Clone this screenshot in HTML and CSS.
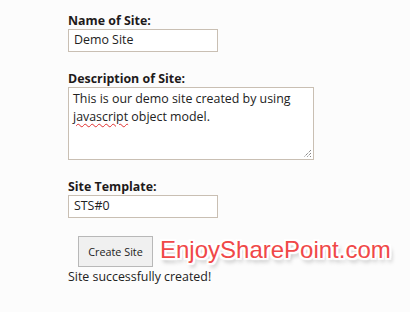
FILE: index.html
```
<!DOCTYPE html>
<html>
<head>
<meta charset="utf-8">
<link rel="stylesheet" href="styles.css">
</head>
<body>
<div class="form">
  <label class="lbl first">Name of Site:</label>
  <div class="field">Demo Site</div>
  <label class="lbl">Description of Site:</label>
  <div class="area">This is our demo site created by using <span class="spell">javascript</span> object model.<svg class="grip" width="9" height="9" viewBox="0 0 9 9"><path d="M8 1L1 8M8 4L4 8M8 7L7 8" stroke="#555" stroke-width="1" stroke-dasharray="1 1" fill="none"/></svg></div>
  <label class="lbl">Site Template:</label>
  <div class="field">STS#0</div>
  <div class="actions">
    <button class="btn">Create Site</button>
    <span class="mark">EnjoySharePoint.com</span>
  </div>
  <div class="msg">Site successfully created!</div>
</div>
</body>
</html>
```
FILE: styles.css
```
html, body { margin: 0; padding: 0; }
body {
  background: #fcfcfc;
  font-family: "Open Sans", "Noto Sans", sans-serif;
  color: #222;
  width: 410px;
  height: 312px;
  overflow: hidden;
}
.form {
  padding: 13px 0 0 68px;
  display: flex;
  flex-direction: column;
  align-items: flex-start;
}
.lbl {
  display: block;
  font-weight: bold;
  font-size: 12.4px;
  line-height: 16px;
  color: #1e1a1a;
  margin-top: 19px;
}
.lbl.first { margin-top: 0; }
.field {
  box-sizing: border-box;
  width: 150px;
  height: 23px;
  border: 1px solid #c9bfb3;
  background: #fff;
  font-size: 12.4px;
  line-height: 20px;
  padding: 0 5px;
  color: #222;
}
.area {
  position: relative;
  box-sizing: border-box;
  width: 246px;
  height: 73px;
  border: 1px solid #c9bfb3;
  background: #fff;
  font-size: 12.4px;
  line-height: 18px;
  padding: 2px 4px;
  color: #222;
}
.spell {
  text-decoration: underline wavy #e03030;
  text-decoration-thickness: 1px;
  text-underline-offset: 2px;
}
.grip { position: absolute; right: 1px; bottom: 1px; }
.actions {
  position: relative;
  margin-top: 18px;
  margin-left: 10px;
  height: 31px;
}
.btn {
  box-sizing: border-box;
  width: 75px;
  height: 31px;
  background: #f0f0f0;
  border: 1px solid #b8b8b8;
  border-radius: 0;
  font-family: "Open Sans", "Noto Sans", sans-serif;
  font-size: 10.8px;
  color: #222;
  padding: 0;
}
.mark {
  position: absolute;
  left: 82px;
  top: -1px;
  white-space: nowrap;
  font-family: "Liberation Sans", Arial, sans-serif;
  font-size: 24px;
  line-height: 30px;
  color: #f04848;
  text-shadow:
    1px 0 0 #fff, -1px 0 0 #fff, 0 1px 0 #fff, 0 -1px 0 #fff,
    2px 0 1px #fff, -2px 0 1px #fff, 0 2px 1px #fff, 0 -2px 1px #fff,
    2px 2px 1px #fff, -2px -2px 1px #fff, 2px -2px 1px #fff, -2px 2px 1px #fff,
    2px 4px 4px rgba(0,0,0,0.35);
}
.msg {
  font-size: 12.4px;
  line-height: 16px;
  margin-top: 2px;
  color: #222;
}
```
